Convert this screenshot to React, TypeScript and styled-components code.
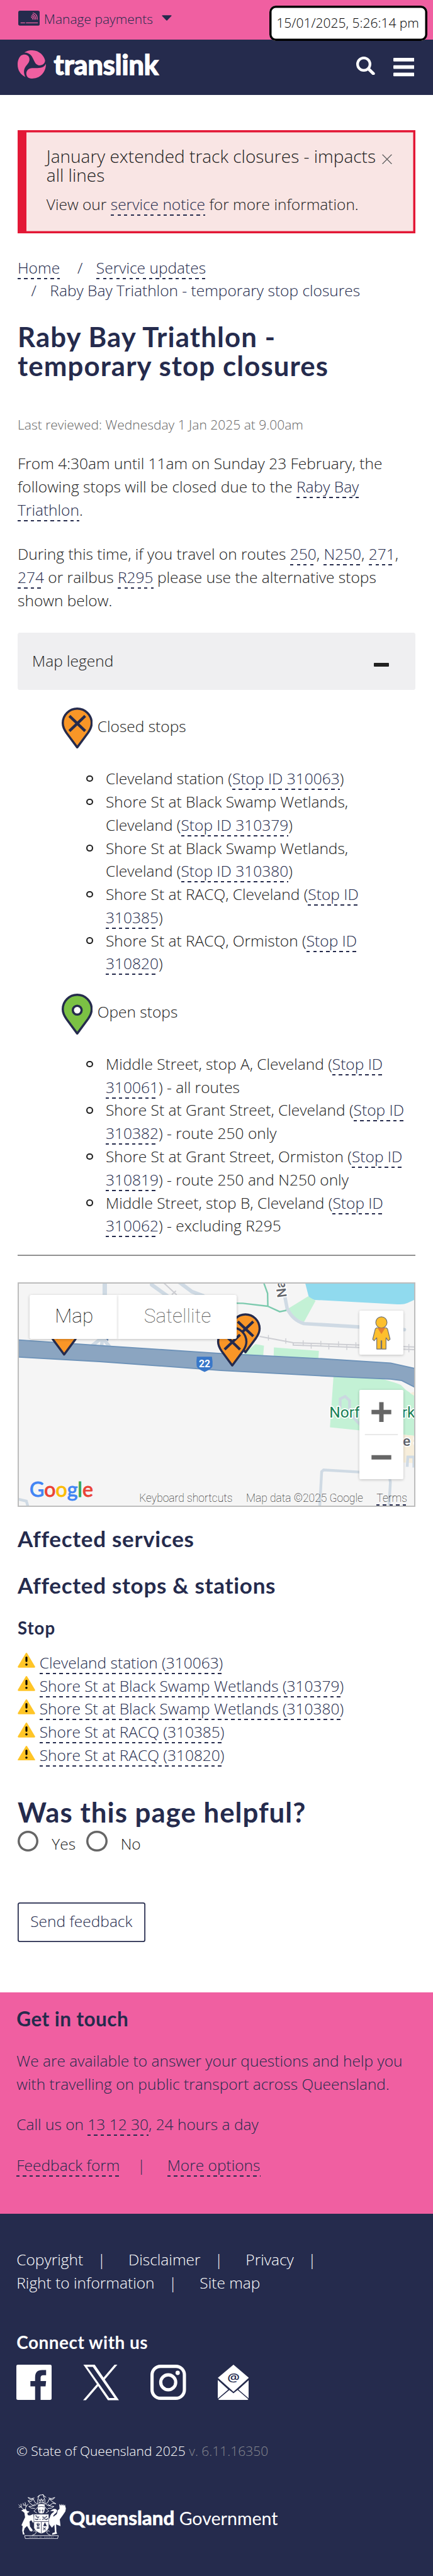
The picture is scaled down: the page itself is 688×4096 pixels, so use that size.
import React from 'react';
import styled, { createGlobalStyle } from 'styled-components';

const navy = '#252b4d';
const pink = '#f05fa1';
const ink = '#212121';
const body = '"Open Sans", "Noto Sans", sans-serif';
const display = 'Lato, "Open Sans", sans-serif';
const mapFont = 'Roboto, "Open Sans", sans-serif';

const GlobalStyle = createGlobalStyle`
  * { box-sizing: border-box; }
  body {
    margin: 0;
    background: #fff;
    color: ${ink};
    font-family: ${body};
    font-weight: 300;
    font-size: 24.5px;
    line-height: 36.76px;
  }
  h1, h2, h3, p, ul { margin: 0; padding: 0; font-weight: inherit; }
  ul { list-style: none; }
  svg { display: block; flex: none; }
`;

const Page = styled.div`
  width: 688px;
  height: 4096px;
  overflow: hidden;
  position: relative;
`;

const Link = styled.a`
  color: ${navy};
  padding-bottom: 2px;
  white-space: nowrap;
  -webkit-box-decoration-break: clone;
  box-decoration-break: clone;
  background: repeating-linear-gradient(90deg, ${navy} 0 5.25px, transparent 5.25px 10.5px) 0 100% / 100% 2px no-repeat;
`;

const TopBar = styled.div`
  display: flex;
  align-items: flex-start;
  height: 63px;
  padding: 12.4px 0 0 28.6px;
  background: ${pink};
  color: ${navy};
  font-size: 21px;
  & > svg:first-child { margin: 4.6px 7px 0 0; }
  & > svg:last-child { margin: 12.1px 0 0 14.4px; }
`;

const Clock = styled.div`
  position: absolute;
  left: 428.3px;
  top: 8.8px;
  width: 251px;
  height: 56px;
  padding: 9px 0 0 11px;
  border-radius: 10px;
  background: #fff;
  box-shadow: inset 0 0 0 3.5px #000;
  color: #000;
  font-size: 21px;
  white-space: nowrap;
`;

const Header = styled.header`
  display: flex;
  align-items: flex-start;
  height: 87.6px;
  padding: 17px 30px 0 28px;
  background: ${navy};
`;

const Wordmark = styled.div`
  flex: 1;
  margin: -4px 0 0 12.6px;
  color: #fff;
  font: 700 43.2px/52px ${display};
  -webkit-text-stroke: 1.6px #fff;
  paint-order: stroke;
`;

const HeaderTools = styled.div`
  display: flex;
  gap: 29px;
  padding-top: 9.8px;
  & > svg:last-child { margin-top: 2.6px; }
`;

const Main = styled.main`
  height: 3017.9px;
  padding: 56px 28px 0;
`;

const Alert = styled.section`
  display: flex;
  justify-content: space-between;
  height: 164.6px;
  padding: 26.4px 37.4px 0 45.8px;
  background: #f9e5e4;
  box-shadow: inset 14px 0 0 #e31836, inset 0 0 0 3.5px #e31836;
  & > svg { margin-top: 12px; }
`;

const AlertTitle = styled.h2`
  font-size: 28px;
  line-height: 30px;
  margin-bottom: 14.2px;
  white-space: nowrap;
`;

const Breadcrumb = styled.nav`
  margin-top: 36.4px;
  color: ${navy};
`;

const Crumb = styled.span`
  display: inline-block;
  & + & { padding-left: 21.5px; }
  & + &::before { content: '/'; margin-right: 21.5px; }
`;

const Title = styled.h1`
  margin-top: 30.5px;
  color: ${navy};
  font: 700 43.8px/46.8px ${display};
  letter-spacing: 0.025em;
`;

const Reviewed = styled.p`
  margin-top: 51.8px;
  color: #666;
  font-size: 21px;
`;

const Para = styled.p<{ $gap: number }>`
  margin-top: ${(p) => p.$gap}px;
  white-space: nowrap;
`;

const LegendBar = styled.div`
  display: flex;
  align-items: center;
  justify-content: space-between;
  height: 91px;
  margin-top: 32.3px;
  padding: 0 42px 0 23px;
  border-radius: 3.5px;
  background: #efeff1;
`;

const Minus = styled.span`
  width: 24.5px;
  height: 6px;
  margin-top: 12px;
  border-radius: 1px;
  background: ${ink};
`;

const LegendHead = styled.div<{ $gap: number; $drop: number }>`
  display: flex;
  gap: 7.4px;
  height: 65.4px;
  margin: ${(p) => p.$gap}px 0 0 70px;
  & > span { margin-top: ${(p) => p.$drop}px; }
`;

const StopList = styled.ul<{ $gap: number }>`
  margin: ${(p) => p.$gap}px 0 0 109.2px;
`;

const StopItem = styled.li`
  display: flex;
  gap: 20.3px;
  white-space: nowrap;
  &::before {
    content: '';
    flex: none;
    width: 10.5px;
    height: 10.5px;
    margin-top: 12.6px;
    border-radius: 50%;
    box-shadow: inset 0 0 0 2.1px ${ink};
  }
`;

const Rule = styled.div`
  height: 2px;
  margin: 27.4px 0 41.8px;
  background: #919191;
`;

const MapFrame = styled.section`
  position: relative;
  height: 356.6px;
  border: 2px solid #bdbdbd;
  overflow: hidden;
  font-family: ${mapFont};
`;

const MapTypes = styled.div`
  position: absolute;
  left: 17.3px;
  top: 17.3px;
  display: flex;
  height: 70px;
`;

const MapType = styled.button<{ $width: number; $active?: boolean }>`
  width: ${(p) => p.$width}px;
  padding: 0 0 2px;
  border: 0;
  border-radius: ${(p) => (p.$active ? '3px 0 0 3px' : '0 3px 3px 0')};
  background: #fff;
  box-shadow: 0 1px 4px rgba(0, 0, 0, 0.22);
  color: ${(p) => (p.$active ? '#000' : '#565656')};
  font: 100 31.5px/36px ${mapFont};
`;

const Controls = styled.div`
  position: absolute;
  left: 540.8px;
  top: 43px;
  display: flex;
  flex-direction: column;
  gap: 56px;
`;

const Control = styled.div<{ $height: number }>`
  display: flex;
  flex-direction: column;
  align-items: center;
  justify-content: center;
  width: 70px;
  height: ${(p) => p.$height}px;
  border-radius: 2px;
  background: #fff;
  box-shadow: 0 1px 4px rgba(0, 0, 0, 0.22);
`;

const Attribution = styled.div`
  position: absolute;
  right: 11px;
  bottom: 0;
  display: flex;
  gap: 21.5px;
  color: #000;
  font-size: 17.5px;
  font-weight: 100;
  line-height: 24px;
  ${Link} { color: #000; height: 24px; padding: 0; }
`;

const Subhead = styled.h2<{ $gap: number }>`
  margin-top: ${(p) => p.$gap}px;
  color: ${navy};
  font: 700 35px/42px ${display};
  letter-spacing: 0.02em;
`;

const MinorHead = styled.h3`
  margin: 30.5px 0 18.5px;
  color: ${navy};
  font: 700 27.6px/36px ${display};
  letter-spacing: 0.035em;
`;

const Affected = styled.li`
  display: flex;
  gap: 6.7px;
  & > svg { margin-top: 2.7px; }
`;

const Question = styled.h2`
  margin-top: 46.4px;
  color: ${navy};
  font: 700 43.8px/50px ${display};
  letter-spacing: 0.023em;
`;

const Choices = styled.div`
  display: flex;
  height: 38px;
  margin-top: 4.9px;
`;

const Choice = styled.label`
  display: flex;
  gap: 21px;
  margin-right: 17.3px;
  padding-top: 2.8px;
  &::before {
    content: '';
    width: 33.3px;
    height: 33.3px;
    margin-top: -2.8px;
    border-radius: 50%;
    box-shadow: inset 0 0 0 3.5px #666;
  }
`;

const SendButton = styled.button`
  display: block;
  width: 202.6px;
  height: 63px;
  margin-top: 75.9px;
  padding: 0 0 1px;
  border: 0;
  border-radius: 3.5px;
  background: #fff;
  box-shadow: inset 0 0 0 1.75px ${navy};
  color: ${navy};
  font: 300 24.5px/36.76px ${body};
`;

const Contact = styled.section`
  height: 351.9px;
  padding: 22.9px 26.3px 0;
  background: ${pink};
  color: ${navy};
`;

const ContactHead = styled.h2`
  font: 700 31.5px/38px ${display};
  letter-spacing: 0.014em;
  margin-bottom: 29.4px;
`;

const ContactText = styled.p`
  margin-bottom: 28px;
  white-space: nowrap;
`;

const Footer = styled.footer`
  height: 576px;
  padding: 55.1px 26.3px 0;
  background: ${navy};
  color: #fff;
`;

const LinkRow = styled.div<{ $before: number; $after: number }>`
  display: flex;
  white-space: nowrap;
  & > i { font-style: normal; margin: 0 ${(p) => p.$after}px 0 ${(p) => p.$before}px; }
`;

const FooterHead = styled.h2`
  margin-top: 57px;
  font: 700 28px/36px ${display};
  letter-spacing: 0.017em;
`;

const Social = styled.div`
  display: flex;
  gap: 50px;
  height: 56px;
  margin-top: 18.4px;
`;

const Legal = styled.p`
  margin-top: 62.9px;
  font-size: 21px;
  & > span { color: #86888f; }
`;

const Government = styled.div`
  display: flex;
  align-items: flex-start;
  margin: 50.4px 0 0 2.3px;
  font: 400 28.6px/40px ${display};
  & > strong {
    margin: 17px 7.4px 0 5px;
    font-size: 31.4px;
    -webkit-text-stroke: 0.7px #fff;
  }
  & > span { margin-top: 18px; }
`;

const PinShape = ({ open }: { open?: boolean }) => (
  <>
    <path
      d="M42.3 108.5 L13 69 C6 59 3 51 3 42.5 A39.3 39.3 0 0 1 81.6 42.5 C81.6 51 78.6 59 71.6 69 Z"
      fill={open ? '#7bc144' : '#f99627'}
      stroke={navy}
      strokeWidth="6"
      strokeLinejoin="round"
    />
    {open ? (
      <circle cx="42.3" cy="45" r="12" fill="#fff" stroke={navy} strokeWidth="6" />
    ) : (
      <path d="M21 23 L64 64 M64 23 L21 64" stroke={navy} strokeWidth="7.5" />
    )}
  </>
);

const Pin = ({ open }: { open?: boolean }) => (
  <svg width="49.4" height="65.4" viewBox="0 0 84.6 112">
    <PinShape open={open} />
  </svg>
);

const CardIcon = () => (
  <svg width="34.2" height="23.8" viewBox="40 57 175 122">
    <rect x="40" y="57" width="175" height="122" rx="14" fill={navy} />
    <path
      d="M146 108 Q157 113 158 127 M150 97 Q170 104 170 127 M157 86 Q182 97 182 127 M162 75 Q196 85 195 127 M61 156 H93 M105 156 H198"
      fill="none"
      stroke={pink}
      strokeWidth="6.5"
      strokeLinecap="round"
    />
  </svg>
);

const LogoMark = () => (
  <svg width="45" height="45" viewBox="36 381 231 231" fill={pink}>
    <path d="M91 399 C115 383 135 381 155 381 C215 381 255 430 260 465 C258 490 240 505 212 504 C190 502 178 485 168 462 C155 432 140 400 91 399Z" />
    <path d="M99 599 C60 580 36 545 36 497 C36 465 48 440 62 425 C85 410 120 413 130 440 C140 470 120 490 105 508 C88 530 80 560 99 599Z" />
    <path d="M267 491 C268 540 240 590 190 606 C175 612 150 612 140 611 C118 607 107 590 107 570 C108 545 125 527 155 526 C190 524 245 535 267 491Z" />
  </svg>
);

const Warning = () => (
  <svg width="28" height="23.8" viewBox="0 0 48 41">
    <path d="M24 2.5 L45.5 38.5 H2.5 Z" fill="#ffc527" stroke="#ffc527" strokeWidth="4.5" strokeLinejoin="round" />
    <path d="M24 13 V22.5" stroke="#000" strokeWidth="5.4" strokeLinecap="round" />
    <circle cx="24" cy="32.4" r="3.1" />
  </svg>
);

const MapCanvas = () => (
  <svg width="628" height="352.6" viewBox="51 3496 1077 605" preserveAspectRatio="none">
    <rect x="51" y="3496" width="1077" height="605" fill="#f5f5f5" />
    <g transform="translate(0 3440) scale(.752 .4464)">
      <path d="M1105 120 L1118 205 Q1125 222 1140 225 L1440 252 Q1462 255 1475 245 L1505 222 V120Z" fill="#90daee" />
      <g fill="#c3f1d5">
        <path d="M1116 203 L1143 230 L1101 360 L1068 335 L1042 280Z" />
        <path d="M925 495 L956 505 L953 568 L880 560Z M992 516 L1155 537 L1153 587 L991 572Z" />
        <path d="M1208 690 L1380 706 Q1440 735 1452 745 L1470 775 L1505 815 V1056 L1300 1022 L1195 1004Z" />
      </g>
      <path d="M1485 795 L1505 784 V815Z M1455 1048 L1505 1055 V1223 L1455 1218Z" fill="#f7eedb" />
      <g fill="none" stroke="#cfdae4">
        <path d="M379 120 V200" strokeWidth="7" vectorEffect="non-scaling-stroke" />
        <path d="M549 132 L605 200 M650 118 L695 175 L735 200" strokeWidth="6" strokeLinecap="round" vectorEffect="non-scaling-stroke" />
        <path d="M1031 200 L1040 278 Q1060 350 1101 370 L1465 407" strokeWidth="5.5" strokeLinecap="round" vectorEffect="non-scaling-stroke" />
        <path d="M370 455 L333 505 M370 455 L368 508 M370 455 L397 512" strokeWidth="5.5" vectorEffect="non-scaling-stroke" />
        <path d="M1158 1485 L1165 1275 L1172 1264 L1310 1278 M1410 1300 L1414 1340 L1409 1485 M1475 1245 L1477 1185 H1505 M1499 1250 V1185 M60 1441 L95 1455 L101 1490" strokeWidth="4.4" vectorEffect="non-scaling-stroke" />
        <path d="M1232 885 V830 L1250 815 L1266 840 V900 Q1275 945 1310 995" stroke="#cbd8e0" strokeWidth="4.4" vectorEffect="non-scaling-stroke" />
      </g>
      <g fill="none" stroke="#cdced3">
        <path d="M592 120 L640 195 M637 170 L622 193 M940 448 L1062 487 L1505 513 M1062 487 V501 L1505 529" strokeWidth="2" vectorEffect="non-scaling-stroke" />
        <path d="M972 440 V473 M1035 460 V493 M1098 472 V507 M1127 487 V523 M1162 475 V510 M1191 492 V528 M1226 478 V515 M1256 495 V531 M1289 484 V518 M1481 494 V545" strokeWidth="1.4" vectorEffect="non-scaling-stroke" />
      </g>
      <path d="M955 120 L969 185 L970 264 L1013 297 L1037 289 M850 245 L880 246 L970 264" fill="none" stroke="#7ccaae" strokeWidth="2.4" vectorEffect="non-scaling-stroke" />
      <path d="M378 455 L391 477 L393 455Z" fill="#6d8fb9" />
      <path
        d="M50 468 L400 508 L790 552 L1150 583 L1415 611 L1510 647 V765 L1455 718 L1415 709 L1250 697 L800 656 L360 602 L50 573Z"
        fill="#8ba5c1"
        stroke="#6d92b8"
        strokeWidth="1.8"
        vectorEffect="non-scaling-stroke"
      />
    </g>
    <path d="M536 3695.5 H577 Q579.5 3709 578.5 3721 Q576 3729 557 3737 Q538 3729 535.5 3721 Q534 3709 536 3695.5Z" fill="#3877c9" />
    <text x="556.8" y="3723.5" fontFamily={mapFont} fontSize="27" fontWeight="700" fill="#fff" textAnchor="middle">22</text>
    <g fontFamily={mapFont} stroke="#fff" strokeWidth="6" strokeLinejoin="round" paintOrder="stroke">
      <text x="897" y="3861.4" fontSize="42" fontWeight="400" fill="#188055">Norfolk Park</text>
      <text x="1097" y="3938" fontSize="39" fontWeight="500" fill="#62656b">e S</text>
      <text transform="translate(781 3532) rotate(-98)" fontSize="36" fontWeight="500" fill="#62656b">Na</text>
    </g>
    <g transform="translate(132 3581)"><PinShape /></g>
    <g transform="translate(627 3577) scale(.98)"><PinShape /></g>
    <g transform="translate(591 3613) scale(.98)"><PinShape /></g>
    <text x="80" y="4077" fontFamily={display} fontSize="55" fontWeight="400" strokeWidth="1.6">
      <tspan fill="#4285f4" stroke="#4285f4">G</tspan>
      <tspan fill="#ea4335" stroke="#ea4335">o</tspan>
      <tspan fill="#fbbc05" stroke="#fbbc05">o</tspan>
      <tspan fill="#4285f4" stroke="#4285f4">g</tspan>
      <tspan fill="#34a853" stroke="#34a853">l</tspan>
      <tspan fill="#ea4335" stroke="#ea4335">e</tspan>
    </text>
  </svg>
);

const Pegman = () => (
  <svg width="30" height="53" viewBox="0 0 51 90">
    <g fill="#fdbf2d" stroke="#6f7072" strokeWidth="2">
      <path d="M13 31 H38 L42 34 L49 62 L44 66 L38 58 V88.5 H26.5 V66 H24.5 V88.5 H13 V58 L6 66 L2 62 L9 34Z" strokeLinejoin="round" />
      <circle cx="25.5" cy="16.5" r="15.2" />
    </g>
    <path d="M15 31.5 H36 L25.5 48Z" fill="#e57f31" />
  </svg>
);

const XLogo = () => (
  <svg width="57" height="56.5" viewBox="0 0 57 56.5" fill="#fff">
    <path
      fillRule="evenodd"
      d="M0.5 0 H18.5 L32.5 20.5 L50 0 H54.5 L34.5 23.5 L57 56.5 H39.5 L24 34 L4.500 56.5 H0 L22 31 Z M6.5 3.5 L41.5 53 H50 L15.5 3.5 Z"
    />
  </svg>
);

const Instagram = () => (
  <svg width="56.6" height="56" viewBox="0 0 56.6 56" fill="none" stroke="#fff" strokeWidth="5.1">
    <rect x="2.6" y="2.6" width="51.4" height="50.8" rx="13.5" />
    <circle cx="28.3" cy="28" r="11.9" />
    <circle cx="43.3" cy="13" r="3.4" fill="#fff" stroke="none" />
  </svg>
);

const Mail = () => (
  <svg width="49.5" height="56" viewBox="0 0 113 157" preserveAspectRatio="none" fill="#fff">
    <path d="M57 0 L113 59 L57 127 L0 59Z" />
    <path d="M0 68 L38 111 L0 151Z M113 68 L75 111 L113 151Z M42 113 L57 127 L72 113 L111 154 Q110 157 106 157 H7 Q3 157 2 154Z" />
    <path d="M0 62 L57 124 L113 62" fill="none" stroke={navy} strokeWidth="5" />
    <text x="57" y="77" fontFamily={body} fontSize="50" fontWeight="600" fill={navy} textAnchor="middle">@</text>
  </svg>
);

const Crest = () => (
  <svg width="76.5" height="71" viewBox="54 44 394 366" fill="#fff">
    {/* stag */}
    <path d="M78 178 L98 166 L118 166 L124 180 L146 186 L138 194 L128 198 L132 215 L150 218 L178 206 L184 250 L188 262 L176 280 L160 256 L146 268 L148 282 L150 308 L172 338 L168 350 L150 345 L126 304 L106 322 L98 350 L106 374 L92 374 L86 342 L90 306 L80 298 L98 258 L110 232 L104 196 L90 184Z" />
    <path d="M98 168 L76 148 L58 130 M76 148 L60 150 M80 150 L76 124 M112 166 L118 142 L92 118 M118 142 L110 112 M120 144 L134 126 M104 136 L92 130" fill="none" stroke="#fff" strokeWidth="4.5" strokeLinecap="round" />
    {/* crane */}
    <path d="M314 182 L338 166 Q362 160 372 176 Q374 192 352 206 Q338 216 342 228 L370 206 L378 176 L392 164 L390 122 L402 138 L404 122 L414 138 L420 124 L428 140 L436 128 L440 146 L444 160 L440 184 L420 214 L394 250 L400 306 L378 296 L364 292 L366 350 L372 368 L330 376 L334 362 L354 356 L350 294 L330 318 L308 290 L298 256 L312 236 Q316 206 344 190 L346 182Z" />
    {/* mantling and helmet */}
    <g fill="none" stroke="#fff" strokeWidth="5" strokeLinejoin="round">
      <path d="M208 70 L226 52 L214 90 L214 126 L190 110 L178 84 L150 88 L134 70 L160 80 L186 74 M204 128 L180 140 L150 118 L134 96 L158 104 L176 84 M190 160 L160 158 L140 144 L168 142 L190 124" />
      <path d="M282 70 L258 52 L272 90 L272 126 L296 110 L308 84 L336 88 L354 70 L326 80 L302 74 M282 128 L306 140 L336 118 L362 122 L332 104 L310 84 M296 160 L326 158 L346 144 L318 142 L296 124" />
      <path d="M236 52 L262 44 M220 62 L236 46 M268 62 L252 46 M218 126 H270 M214 150 L182 182 L206 198 M272 150 L304 182 L280 198" />
      <path d="M224 88 L238 96 L242 80 L248 96 L262 88 L254 102 L264 116 L244 108 L224 116 L234 102Z" />
    </g>
    <path d="M216 132 Q243 122 270 132 L274 158 L264 196 Q243 206 222 196 L212 158Z" />
    <path d="M216 148 Q243 140 270 148 M230 168 V194 M222 178 H238 M254 168 V194 M246 178 H262" fill="none" stroke={navy} strokeWidth="4" />
    {/* shield */}
    <path d="M182 208 H304 V318 Q296 350 243 368 Q190 350 182 318Z" stroke={navy} strokeWidth="3" />
    <path d="M184 268 H302 M243 270 V366" stroke={navy} strokeWidth="4" />
    <path d="M194 222 Q206 218 208 232 Q220 240 224 226 M192 246 Q204 258 218 246 M228 250 H236 M252 228 Q270 244 290 222 M250 252 Q266 240 276 248 Q288 260 294 240 M206 284 L212 304 M216 278 V304 M228 284 L222 304 M206 314 H228 M206 324 H228 M258 318 L278 338 M278 318 L258 338" fill="none" stroke={navy} strokeWidth="6" />
    <path d="M272 274 L258 306 H288Z" fill={navy} />
    {/* scroll */}
    <path d="M106 383 H382 L376 408 H112Z M166 382 Q206 368 200 350 Q190 336 178 348 M322 382 Q282 368 288 350 Q298 336 310 348" fill="none" stroke="#fff" strokeWidth="4.5" />
    <path d="M144 396 H212 M228 396 H250 M266 396 H346" stroke="#fff" strokeWidth="8" strokeDasharray="3 5" opacity=".75" />
  </svg>
);

const closed: React.ReactNode[] = [
  <>Cleveland station (<Link>Stop ID 310063</Link>)</>,
  <>Shore St at Black Swamp Wetlands,<br />Cleveland (<Link>Stop ID 310379</Link>)</>,
  <>Shore St at Black Swamp Wetlands,<br />Cleveland (<Link>Stop ID 310380</Link>)</>,
  <>Shore St at RACQ, Cleveland (<Link>Stop ID<br />310385</Link>)</>,
  <>Shore St at RACQ, Ormiston (<Link>Stop ID<br />310820</Link>)</>,
];

const open: React.ReactNode[] = [
  <>Middle Street, stop A, Cleveland (<Link>Stop ID<br />310061</Link>) - all routes</>,
  <>Shore St at Grant Street, Cleveland (<Link>Stop ID<br />310382</Link>) - route 250 only</>,
  <>Shore St at Grant Street, Ormiston (<Link>Stop ID<br />310819</Link>) - route 250 and N250 only</>,
  <>Middle Street, stop B, Cleveland (<Link>Stop ID<br />310062</Link>) - excluding R295</>,
];

const affected = [
  'Cleveland station (310063)',
  'Shore St at Black Swamp Wetlands (310379)',
  'Shore St at Black Swamp Wetlands (310380)',
  'Shore St at RACQ (310385)',
  'Shore St at RACQ (310820)',
];

export default function App() {
  return (
    <Page>
      <GlobalStyle />
      <TopBar>
        <CardIcon />
        <span>Manage payments</span>
        <svg width="16" height="9" viewBox="0 0 16 9"><path d="M1.2 1 H14.8 L8 8Z" fill={navy} stroke={navy} strokeWidth="1.6" strokeLinejoin="round" /></svg>
      </TopBar>
      <Clock>15/01/2025, 5:26:14 pm</Clock>
      <Header>
        <LogoMark />
        <Wordmark>translink</Wordmark>
        <HeaderTools>
          <svg width="29.5" height="29.5" viewBox="0 0 29.5 29.5" fill="none" stroke="#fff">
            <circle cx="12" cy="12" r="9.9" strokeWidth="4.2" />
            <path d="M19.5 19.5 L27.2 27" strokeWidth="5" strokeLinecap="round" />
          </svg>
          <svg width="33.3" height="29.2" viewBox="0 0 33.3 29.2" fill="#fff">
            <rect width="33.3" height="5.7" rx="1" />
            <rect y="11.7" width="33.3" height="5.7" rx="1" />
            <rect y="23.5" width="33.3" height="5.7" rx="1" />
          </svg>
        </HeaderTools>
      </Header>
      <Main>
        <Alert>
          <div>
            <AlertTitle>January extended track closures - impacts<br />all lines</AlertTitle>
            <p>View our <Link>service notice</Link> for more information.</p>
          </div>
          <svg width="16" height="17" viewBox="0 0 16 17" fill="none" strokeWidth="1.5">
            <path d="M0.6 1.7 L15.4 16.7 M15.4 1.7 L0.6 16.7" stroke="#fff" />
            <path d="M0.6 0.7 L15.4 15.7 M15.4 0.7 L0.6 15.7" stroke="#6b6363" />
          </svg>
        </Alert>
        <Breadcrumb>
          <Crumb><Link>Home</Link></Crumb>{' '}
          <Crumb><Link>Service updates</Link></Crumb>{' '}
          <Crumb>Raby Bay Triathlon - temporary stop closures</Crumb>
        </Breadcrumb>
        <Title>Raby Bay Triathlon -<br />temporary stop closures</Title>
        <Reviewed>Last reviewed: Wednesday 1 Jan 2025 at 9.00am</Reviewed>
        <Para $gap={25.4}>
          From 4:30am until 11am on Sunday 23 February, the<br />
          following stops will be closed due to the <Link>Raby Bay<br />Triathlon</Link>.
        </Para>
        <Para $gap={33.9}>
          During this time, if you travel on routes <Link>250</Link>, <Link>N250</Link>, <Link>271</Link>,<br />
          <Link>274</Link> or railbus <Link>R295</Link> please use the alternative stops<br />
          shown below.
        </Para>
        <LegendBar>Map legend<Minus /></LegendBar>
        <LegendHead $gap={28} $drop={12.1}><Pin /><span>Closed stops</span></LegendHead>
        <StopList $gap={30}>
          {closed.map((c, i) => <StopItem key={i}><div>{c}</div></StopItem>)}
        </StopList>
        <LegendHead $gap={28.5} $drop={11.4}><Pin open /><span>Open stops</span></LegendHead>
        <StopList $gap={28.8}>
          {open.map((c, i) => <StopItem key={i}><div>{c}</div></StopItem>)}
        </StopList>
        <Rule />
        <MapFrame>
          <MapCanvas />
          <MapTypes>
            <MapType $width={141} $active>Map</MapType>
            <MapType $width={187.5}>Satellite</MapType>
          </MapTypes>
          <Controls>
            <Control $height={70}><Pegman /></Control>
            <Control $height={142}>
              <svg width="70" height="142" viewBox="0 0 70 142">
                <path d="M19.3 35.2 H50.7 M35 19.5 V51 M19.3 107.3 H50.7" stroke="#666" strokeWidth="7" />
                <path d="M8.8 71 H61.2" stroke="#e6e6e6" strokeWidth="1.75" />
              </svg>
            </Control>
          </Controls>
          <Attribution>
            <span>Keyboard shortcuts</span>
            <span>Map data ©2025 Google</span>
            <Link>Terms</Link>
          </Attribution>
        </MapFrame>
        <Subhead $gap={29.6}>Affected services</Subhead>
        <Subhead $gap={31.4}>Affected stops &amp; stations</Subhead>
        <MinorHead>Stop</MinorHead>
        <ul>
          {affected.map((a) => (
            <Affected key={a}><Warning /><span><Link>{a}</Link></span></Affected>
          ))}
        </ul>
        <Question>Was this page helpful?</Question>
        <Choices>
          <Choice>Yes</Choice>
          <Choice>No</Choice>
        </Choices>
        <SendButton>Send feedback</SendButton>
      </Main>
      <Contact>
        <ContactHead>Get in touch</ContactHead>
        <ContactText>
          We are available to answer your questions and help you<br />
          with travelling on public transport across Queensland.
        </ContactText>
        <ContactText>Call us on <Link>13 12 30</Link>, 24 hours a day</ContactText>
        <LinkRow $before={27.6} $after={34.4}>
          <span><Link>Feedback form</Link></span><i>|</i><span><Link>More options</Link></span>
        </LinkRow>
      </Contact>
      <Footer>
        <LinkRow $before={22.5} $after={36}>
          <span>Copyright</span><i>|</i><span>Disclaimer</span><i>|</i><span>Privacy</span><i>|</i>
        </LinkRow>
        <LinkRow $before={22.5} $after={36}>
          <span>Right to information</span><i>|</i><span>Site map</span>
        </LinkRow>
        <FooterHead>Connect with us</FooterHead>
        <Social>
          <svg width="56" height="56" viewBox="0 0 128 157" preserveAspectRatio="none">
            <rect width="128" height="157" rx="6" ry="7" fill="#fff" />
            <path d="M68 157 V97 H51 V73 H68 V56 Q68 24 94 24 H108 V47 H98 Q88 47 88 58 V73 H108 L106 97 H88 V157Z" fill={navy} />
          </svg>
          <XLogo />
          <Instagram />
          <Mail />
        </Social>
        <Legal>© State of Queensland 2025 <span>v. 6.11.16350</span></Legal>
        <Government>
          <Crest />
          <strong>Queensland</strong>
          <span>Government</span>
        </Government>
      </Footer>
    </Page>
  );
}
